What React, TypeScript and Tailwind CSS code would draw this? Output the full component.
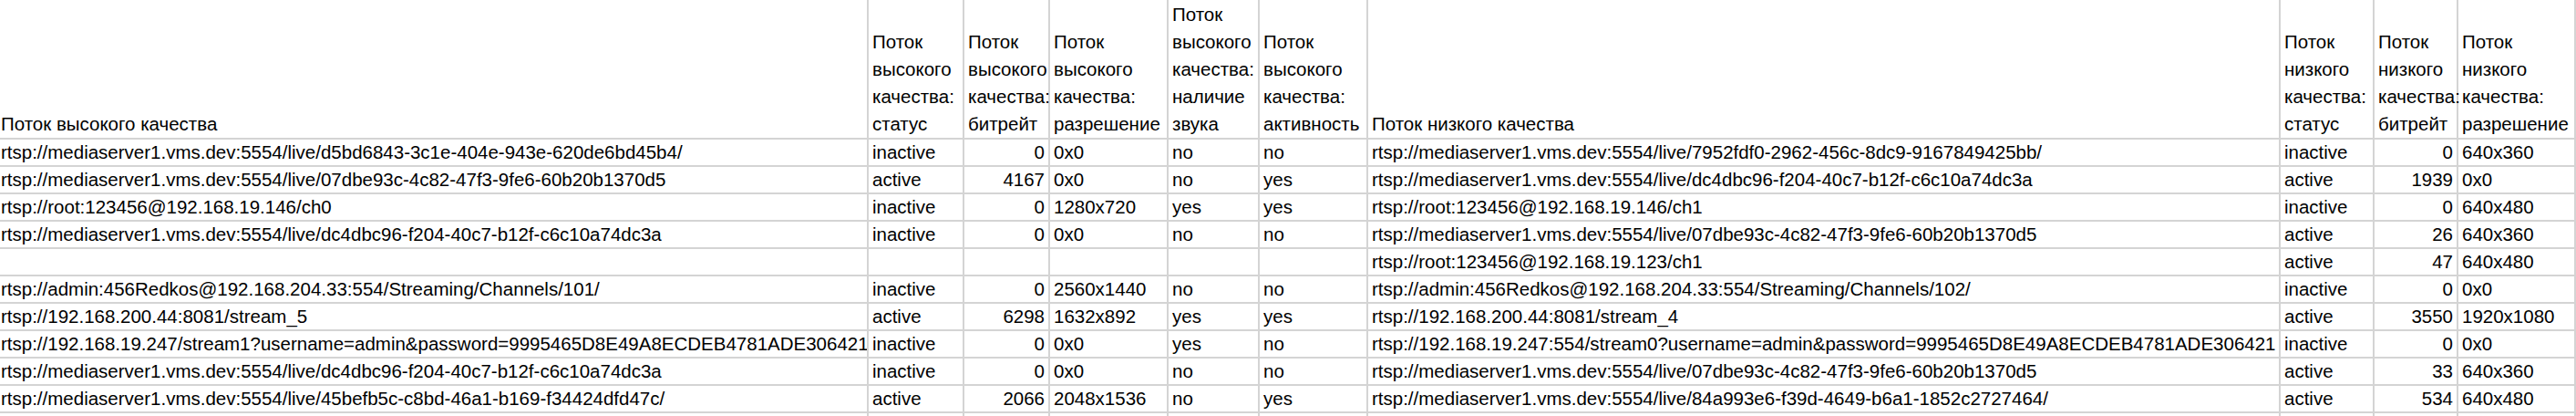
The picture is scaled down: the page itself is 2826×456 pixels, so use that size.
import React from "react";

type Row = [string, string, string, string, string, string, string, string, string, string];

const rows: Row[] = [
  ["rtsp://mediaserver1.vms.dev:5554/live/d5bd6843-3c1e-404e-943e-620de6bd45b4/", "inactive", "0", "0x0", "no", "no", "rtsp://mediaserver1.vms.dev:5554/live/7952fdf0-2962-456c-8dc9-9167849425bb/", "inactive", "0", "640x360"],
  ["rtsp://mediaserver1.vms.dev:5554/live/07dbe93c-4c82-47f3-9fe6-60b20b1370d5", "active", "4167", "0x0", "no", "yes", "rtsp://mediaserver1.vms.dev:5554/live/dc4dbc96-f204-40c7-b12f-c6c10a74dc3a", "active", "1939", "0x0"],
  ["rtsp://root:123456@192.168.19.146/ch0", "inactive", "0", "1280x720", "yes", "yes", "rtsp://root:123456@192.168.19.146/ch1", "inactive", "0", "640x480"],
  ["rtsp://mediaserver1.vms.dev:5554/live/dc4dbc96-f204-40c7-b12f-c6c10a74dc3a", "inactive", "0", "0x0", "no", "no", "rtsp://mediaserver1.vms.dev:5554/live/07dbe93c-4c82-47f3-9fe6-60b20b1370d5", "active", "26", "640x360"],
  ["", "", "", "", "", "", "rtsp://root:123456@192.168.19.123/ch1", "active", "47", "640x480"],
  ["rtsp://admin:456Redkos@192.168.204.33:554/Streaming/Channels/101/", "inactive", "0", "2560x1440", "no", "no", "rtsp://admin:456Redkos@192.168.204.33:554/Streaming/Channels/102/", "inactive", "0", "0x0"],
  ["rtsp://192.168.200.44:8081/stream_5", "active", "6298", "1632x892", "yes", "yes", "rtsp://192.168.200.44:8081/stream_4", "active", "3550", "1920x1080"],
  ["rtsp://192.168.19.247/stream1?username=admin&password=9995465D8E49A8ECDEB4781ADE306421", "inactive", "0", "0x0", "yes", "no", "rtsp://192.168.19.247:554/stream0?username=admin&password=9995465D8E49A8ECDEB4781ADE306421", "inactive", "0", "0x0"],
  ["rtsp://mediaserver1.vms.dev:5554/live/dc4dbc96-f204-40c7-b12f-c6c10a74dc3a", "inactive", "0", "0x0", "no", "no", "rtsp://mediaserver1.vms.dev:5554/live/07dbe93c-4c82-47f3-9fe6-60b20b1370d5", "active", "33", "640x360"],
  ["rtsp://mediaserver1.vms.dev:5554/live/45befb5c-c8bd-46a1-b169-f34424dfd47c/", "active", "2066", "2048x1536", "no", "yes", "rtsp://mediaserver1.vms.dev:5554/live/84a993e6-f39d-4649-b6a1-1852c2727464/", "active", "534", "640x480"],
  ["", "", "", "", "", "", "", "", "", ""],
];

const headers: string[][] = [
  ["Поток высокого качества"],
  ["Поток", "высокого", "качества:", "статус"],
  ["Поток", "высокого", "качества:", "битрейт"],
  ["Поток", "высокого", "качества:", "разрешение"],
  ["Поток", "высокого", "качества:", "наличие", "звука"],
  ["Поток", "высокого", "качества:", "активность"],
  ["Поток низкого качества"],
  ["Поток", "низкого", "качества:", "статус"],
  ["Поток", "низкого", "качества:", "битрейт"],
  ["Поток", "низкого", "качества:", "разрешение"],
];

const rightAligned = new Set([2, 8]);

export default function App() {
  return (
    <div
      className="w-[2826px] h-[456px] overflow-hidden bg-white text-black text-[20.5px]"
      style={{ fontFamily: "'Liberation Sans', Arial, sans-serif" }}
    >
      <div className="grid grid-cols-[953px_105px_94px_130px_100px_119px_1001px_103px_92px_129px]">
        {headers.map((lines, i) => (
          <div
            key={`h${i}`}
            className={`h-[153px] border-r-2 border-b-2 border-[#d4d4d4] flex flex-col justify-end whitespace-nowrap leading-[30px] ${i === 0 ? "pl-[1px]" : "pl-[4px]"}`}
          >
            {lines.map((l, j) => (
              <span key={j}>{l}</span>
            ))}
          </div>
        ))}
        {rows.map((r, ri) =>
          r.map((c, ci) => (
            <div
              key={`r${ri}c${ci}`}
              className={`h-[30px] border-r-2 border-b-2 border-[#d4d4d4] leading-[28px] whitespace-nowrap overflow-hidden ${ci === 0 ? "pl-[1px]" : "pl-[4px]"} ${rightAligned.has(ci) ? "text-right pr-[4px]" : ""}`}
            >
              {c}
            </div>
          ))
        )}
      </div>
    </div>
  );
}
